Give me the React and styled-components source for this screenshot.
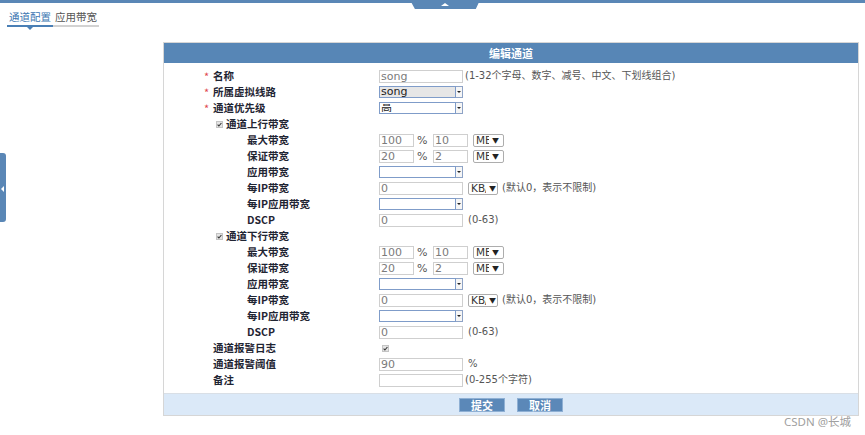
import React from "react";
import styled, { createGlobalStyle } from "styled-components";

const GlobalStyle = createGlobalStyle`
  body {
    margin: 0;
    background: #fff;
    font-family: "Noto Sans CJK SC", "DejaVu Sans", sans-serif;
  }
`;

const uplink = [
  { label: "最大带宽", kind: "ratio", pct: "100", val: "10" },
  { label: "保证带宽", kind: "ratio", pct: "20", val: "2" },
  { label: "应用带宽", kind: "select" },
  { label: "每IP带宽", kind: "perip" },
  { label: "每IP应用带宽", kind: "select" },
  { label: "DSCP", kind: "dscp" },
];

const BandwidthBlock = ({ title }) => (
  <>
    <Row>
      <Label $indent={52}>
        <Check />
        {title}
      </Label>
    </Row>
    {uplink.map(item => (
      <Row key={item.label}>
        <Label $indent={83}>{item.label}</Label>
        <Field>
          {item.kind === "ratio" && (
            <>
              <TextInput $w={35} readOnly value={item.pct} />
              <Pct>%</Pct>
              <TextInput $w={35} readOnly value={item.val} />
              <UnitSelect $gap={5} $w={31}>
                <UnitText $w={13}>MB</UnitText>
                <Caret $gap={3}>▼</Caret>
              </UnitSelect>
            </>
          )}
          {item.kind === "select" && (
            <Select>
              <SelectValue />
              <ArrowBox />
            </Select>
          )}
          {item.kind === "perip" && (
            <>
              <TextInput $w={84} readOnly value="0" />
              <UnitSelect $gap={5} $w={30}>
                <UnitText $w={15}>KB/s</UnitText>
                <Caret $gap={3}>▼</Caret>
              </UnitSelect>
              <Hint $gap={4}>(默认0，表示不限制)</Hint>
            </>
          )}
          {item.kind === "dscp" && (
            <>
              <TextInput $w={84} readOnly value="0" />
              <Hint $gap={5}>(0-63)</Hint>
            </>
          )}
        </Field>
      </Row>
    ))}
  </>
);

const App = () => {
  return (
    <Page>
      <GlobalStyle />
      <TopBar />
      <PullTab />
      <SideHandle />
      <TabBar>
        <Tab $active>通道配置</Tab>
        <Tab>应用带宽</Tab>
      </TabBar>

      <Panel>
        <PanelHeader>编辑通道</PanelHeader>
        <PanelBody>
          <Row>
            <Label $indent={40}>
              <Star>*</Star>名称
            </Label>
            <Field>
              <TextInput $w={84} readOnly value="song" />
              <Hint $gap={2}>(1-32个字母、数字、减号、中文、下划线组合)</Hint>
            </Field>
          </Row>
          <Row>
            <Label $indent={40}>
              <Star>*</Star>所属虚拟线路
            </Label>
            <Field>
              <Select>
                <SelectValue $bg="#e6e6e6">song</SelectValue>
                <ArrowBox />
              </Select>
            </Field>
          </Row>
          <Row>
            <Label $indent={40}>
              <Star>*</Star>通道优先级
            </Label>
            <Field>
              <Select>
                <SelectValue>高</SelectValue>
                <ArrowBox />
              </Select>
            </Field>
          </Row>

          <BandwidthBlock title="通道上行带宽" />
          <BandwidthBlock title="通道下行带宽" />

          <Row>
            <Label $indent={49}>通道报警日志</Label>
            <Field>
              <Check $gap={3} />
            </Field>
          </Row>
          <Row>
            <Label $indent={49}>通道报警阈值</Label>
            <Field>
              <TextInput $w={84} readOnly value="90" />
              <Hint $gap={5}>%</Hint>
            </Field>
          </Row>
          <Row>
            <Label $indent={49}>备注</Label>
            <Field>
              <TextInput $w={84} readOnly value="" />
              <Hint $gap={2}>(0-255个字符)</Hint>
            </Field>
          </Row>
        </PanelBody>
        <PanelFooter>
          <Button>提交</Button>
          <Button>取消</Button>
        </PanelFooter>
      </Panel>

      <Watermark>CSDN @长城</Watermark>
    </Page>
  );
};

export default App;

const Page = styled.div`
  position: relative;
  width: 865px;
  height: 435px;
  overflow: hidden;
`;

const TopBar = styled.div`
  height: 3px;
  background: #5a87b6;
`;

const PullTab = styled.div`
  position: absolute;
  top: 0;
  left: 410px;
  width: 70px;
  height: 9px;
  background: #5a87b6;
  clip-path: polygon(0 0, 100% 0, 94% 100%, 7% 100%);

  &::after {
    content: "";
    position: absolute;
    left: 31px;
    top: 3px;
    border-left: 4px solid transparent;
    border-right: 4px solid transparent;
    border-bottom: 3px solid #fff;
  }
`;

const SideHandle = styled.div`
  position: absolute;
  left: 0;
  top: 153px;
  width: 6px;
  height: 69px;
  background: #5a87b6;
  border-radius: 0 3px 3px 0;

  &::after {
    content: "";
    position: absolute;
    left: 1px;
    top: 33px;
    border-top: 3px solid transparent;
    border-bottom: 3px solid transparent;
    border-right: 3px solid #fff;
  }
`;

const TabBar = styled.div`
  display: flex;
  margin: 6px 0 0 7px;
`;

const Tab = styled.div`
  position: relative;
  width: 46px;
  padding-bottom: 1px;
  font-size: 10.5px;
  line-height: 15px;
  text-align: center;
  color: ${p => (p.$active ? "#3d77b2" : "#555")};
  border-bottom: 2px solid ${p => (p.$active ? "#4a7fb5" : "#d2d2d2")};

  ${p =>
    p.$active &&
    `
    &::after {
      content: "";
      position: absolute;
      left: 50%;
      bottom: -5px;
      margin-left: -3px;
      border-left: 3px solid transparent;
      border-right: 3px solid transparent;
      border-top: 3px solid #4a7fb5;
    }
  `}
`;

const Panel = styled.div`
  margin: 15px 0 0 163px;
  width: 696px;
  box-sizing: border-box;
  border: 1px solid #d6d6d6;
`;

const PanelHeader = styled.div`
  height: 20px;
  line-height: 20px;
  background: #5786b6;
  color: #fff;
  font-size: 11px;
  font-weight: 700;
  text-align: center;
`;

const PanelBody = styled.div`
  padding: 5px 0 5px;
`;

const Row = styled.div`
  display: grid;
  grid-template-columns: 215px 1fr;
  height: 16px;
  align-items: center;
  line-height: 1;
`;

const Label = styled.div`
  display: flex;
  align-items: center;
  padding-left: ${p => p.$indent}px;
  font-size: 10.5px;
  font-weight: 700;
  color: #1f2533;
  white-space: nowrap;
`;

const Star = styled.span`
  width: 9px;
  color: #e0484f;
  font-weight: 400;
  font-size: 11px;
`;

const Field = styled.div`
  display: flex;
  align-items: center;
`;

const TextInput = styled.input`
  width: ${p => p.$w}px;
  height: 13px;
  box-sizing: border-box;
  margin: 0;
  padding: 0 1px;
  border: 1px solid #cfcfcf;
  border-radius: 0;
  outline: none;
  font-family: "DejaVu Sans", sans-serif;
  font-size: 11px;
  color: #7b7b7b;
  background: #fff;
`;

const Pct = styled.span`
  width: 16px;
  padding-left: 3px;
  font-family: "DejaVu Sans", sans-serif;
  font-size: 11px;
  color: #555;
`;

const Select = styled.div`
  display: flex;
  width: 84px;
  height: 12px;
`;

const SelectValue = styled.div`
  flex: 1;
  box-sizing: border-box;
  border: 1px solid #7f9cc9;
  background: ${p => p.$bg || "#fff"};
  padding-left: 1px;
  font-family: "DejaVu Sans", "Noto Sans CJK SC", sans-serif;
  font-size: 11px;
  line-height: 10px;
  color: #222;
  overflow: hidden;
`;

const ArrowBox = styled.div`
  position: relative;
  width: 7px;
  box-sizing: border-box;
  border: 1px solid #8ea3c6;
  border-left: none;
  background: #f6f6f6;

  &::after {
    content: "";
    position: absolute;
    left: 1px;
    top: 4px;
    border-left: 2px solid transparent;
    border-right: 2px solid transparent;
    border-top: 2px solid #222;
  }
`;

const UnitSelect = styled.div`
  display: flex;
  align-items: center;
  width: ${p => p.$w}px;
  height: 13px;
  box-sizing: border-box;
  margin-left: ${p => p.$gap}px;
  padding-left: 2px;
  border: 1px solid #adadad;
  border-radius: 2px;
  background: #fff;
  overflow: hidden;
`;

const UnitText = styled.span`
  flex-shrink: 0;
  width: ${p => p.$w}px;
  overflow: hidden;
  white-space: nowrap;
  font-family: "DejaVu Sans", sans-serif;
  font-size: 10.5px;
  color: #333;
`;

const Caret = styled.span`
  flex-shrink: 0;
  margin-left: ${p => p.$gap}px;
  font-size: 7px;
  color: #222;
`;

const Hint = styled.span`
  margin-left: ${p => p.$gap}px;
  font-family: "DejaVu Sans", "Noto Sans CJK SC", sans-serif;
  font-size: 10px;
  color: #555;
  white-space: nowrap;
`;

const CheckBox = styled.span`
  position: relative;
  display: inline-block;
  width: 7px;
  height: 7px;
  box-sizing: border-box;
  margin: 0 3px 0 ${p => p.$gap || 0}px;
  border: 1px solid #c4c4c4;
  background: #e4e4e4;

  svg {
    position: absolute;
    left: -1px;
    top: -1px;
  }
`;

const Check = ({ $gap }) => (
  <CheckBox $gap={$gap}>
    <svg width="7" height="7" viewBox="0 0 7 7">
      <path d="M1.6 3.7 L2.9 5 L5.4 2" fill="none" stroke="#333" strokeWidth="1.1" />
    </svg>
  </CheckBox>
);

const PanelFooter = styled.div`
  display: flex;
  justify-content: center;
  align-items: center;
  gap: 12px;
  height: 21px;
  border-top: 1px solid #d9dfe6;
  background: #dbe9f8;
`;

const Button = styled.div`
  width: 46px;
  height: 14px;
  box-sizing: border-box;
  border: 1px solid #8fb0d4;
  background: #5b88b8;
  color: #fff;
  font-size: 11px;
  font-weight: 700;
  line-height: 12px;
  text-align: center;
`;

const Watermark = styled.div`
  position: absolute;
  right: 14px;
  top: 413px;
  font-family: "Noto Sans", "Noto Sans CJK SC", sans-serif;
  font-size: 11.5px;
  color: #a0a0a0;
`;
